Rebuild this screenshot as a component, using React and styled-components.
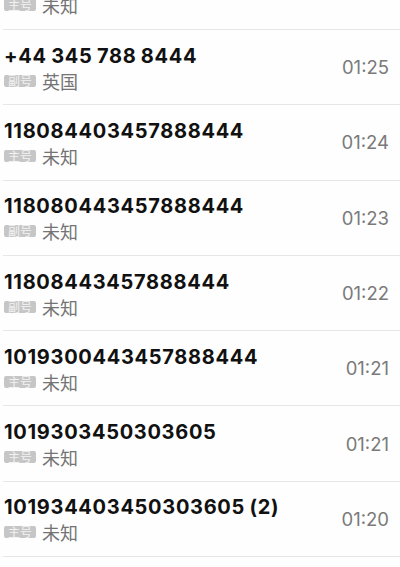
import React from "react";
import styled, { createGlobalStyle } from "styled-components";

const Global = createGlobalStyle`
  html, body { margin: 0; padding: 0; background: #fefefe; overflow: hidden; }
  body { width: 400px; height: 567px; }
`;

const Screen = styled.div`
  width: 400px;
  height: 567px;
  overflow: hidden;
  background: #fefefe;
  font-family: Inter, "Noto Sans CJK SC", sans-serif;
`;

const List = styled.div`
  margin-top: -45.3px;
  display: flex;
  flex-direction: column;
`;

const Row = styled.div`
  box-sizing: border-box;
  height: 75.3px;
  display: flex;
  align-items: center;
  justify-content: space-between;
  padding: 0 11px 0 1px;
  margin-left: 3px;
  border-bottom: 1px solid #e6e6e6;
`;

const Info = styled.div`
  display: flex;
  flex-direction: column;
  gap: 2px;
`;

const Number = styled.div`
  font-family: Inter, "Noto Sans CJK SC", sans-serif;
  font-weight: 700;
  font-size: 20px;
  line-height: 25px;
  letter-spacing: 0.7px;
  word-spacing: -1px;
  color: #111;
`;

const Sub = styled.div`
  display: flex;
  align-items: center;
  gap: 6px;
  font-family: "Noto Sans CJK SC", sans-serif;
  font-size: 18px;
  line-height: 20px;
  color: #747474;
`;

const Badge = styled.span`
  display: inline-block;
  height: 12px;
  line-height: 12px;
  padding: 0 4px;
  border-radius: 2px;
  background: #c6c6c6;
  color: #f2f2f2;
  font-size: 12px;
  font-family: "Noto Sans CJK SC", sans-serif;
`;

const Time = styled.div`
  font-family: Inter, sans-serif;
  font-weight: 400;
  font-size: 18.5px;
  color: #7a7a7a;
`;

const calls = [
  { num: "1019344034503036", kind: "主号", place: "未知", time: "01:26" },
  { num: "+44 345 788 8444", kind: "副号", place: "英国", time: "01:25" },
  { num: "118084403457888444", kind: "主号", place: "未知", time: "01:24" },
  { num: "118080443457888444", kind: "副号", place: "未知", time: "01:23" },
  { num: "11808443457888444", kind: "副号", place: "未知", time: "01:22" },
  { num: "1019300443457888444", kind: "主号", place: "未知", time: "01:21" },
  { num: "1019303450303605", kind: "主号", place: "未知", time: "01:21" },
  { num: "101934403450303605 (2)", kind: "主号", place: "未知", time: "01:20" },
];

export default function App() {
  return (
    <Screen>
      <Global />
      <List>
        {calls.map((c, i) => (
          <Row key={i}>
            <Info>
              <Number>{c.num}</Number>
              <Sub>
                <Badge>{c.kind}</Badge>
                <span>{c.place}</span>
              </Sub>
            </Info>
            <Time>{c.time}</Time>
          </Row>
        ))}
      </List>
    </Screen>
  );
}
